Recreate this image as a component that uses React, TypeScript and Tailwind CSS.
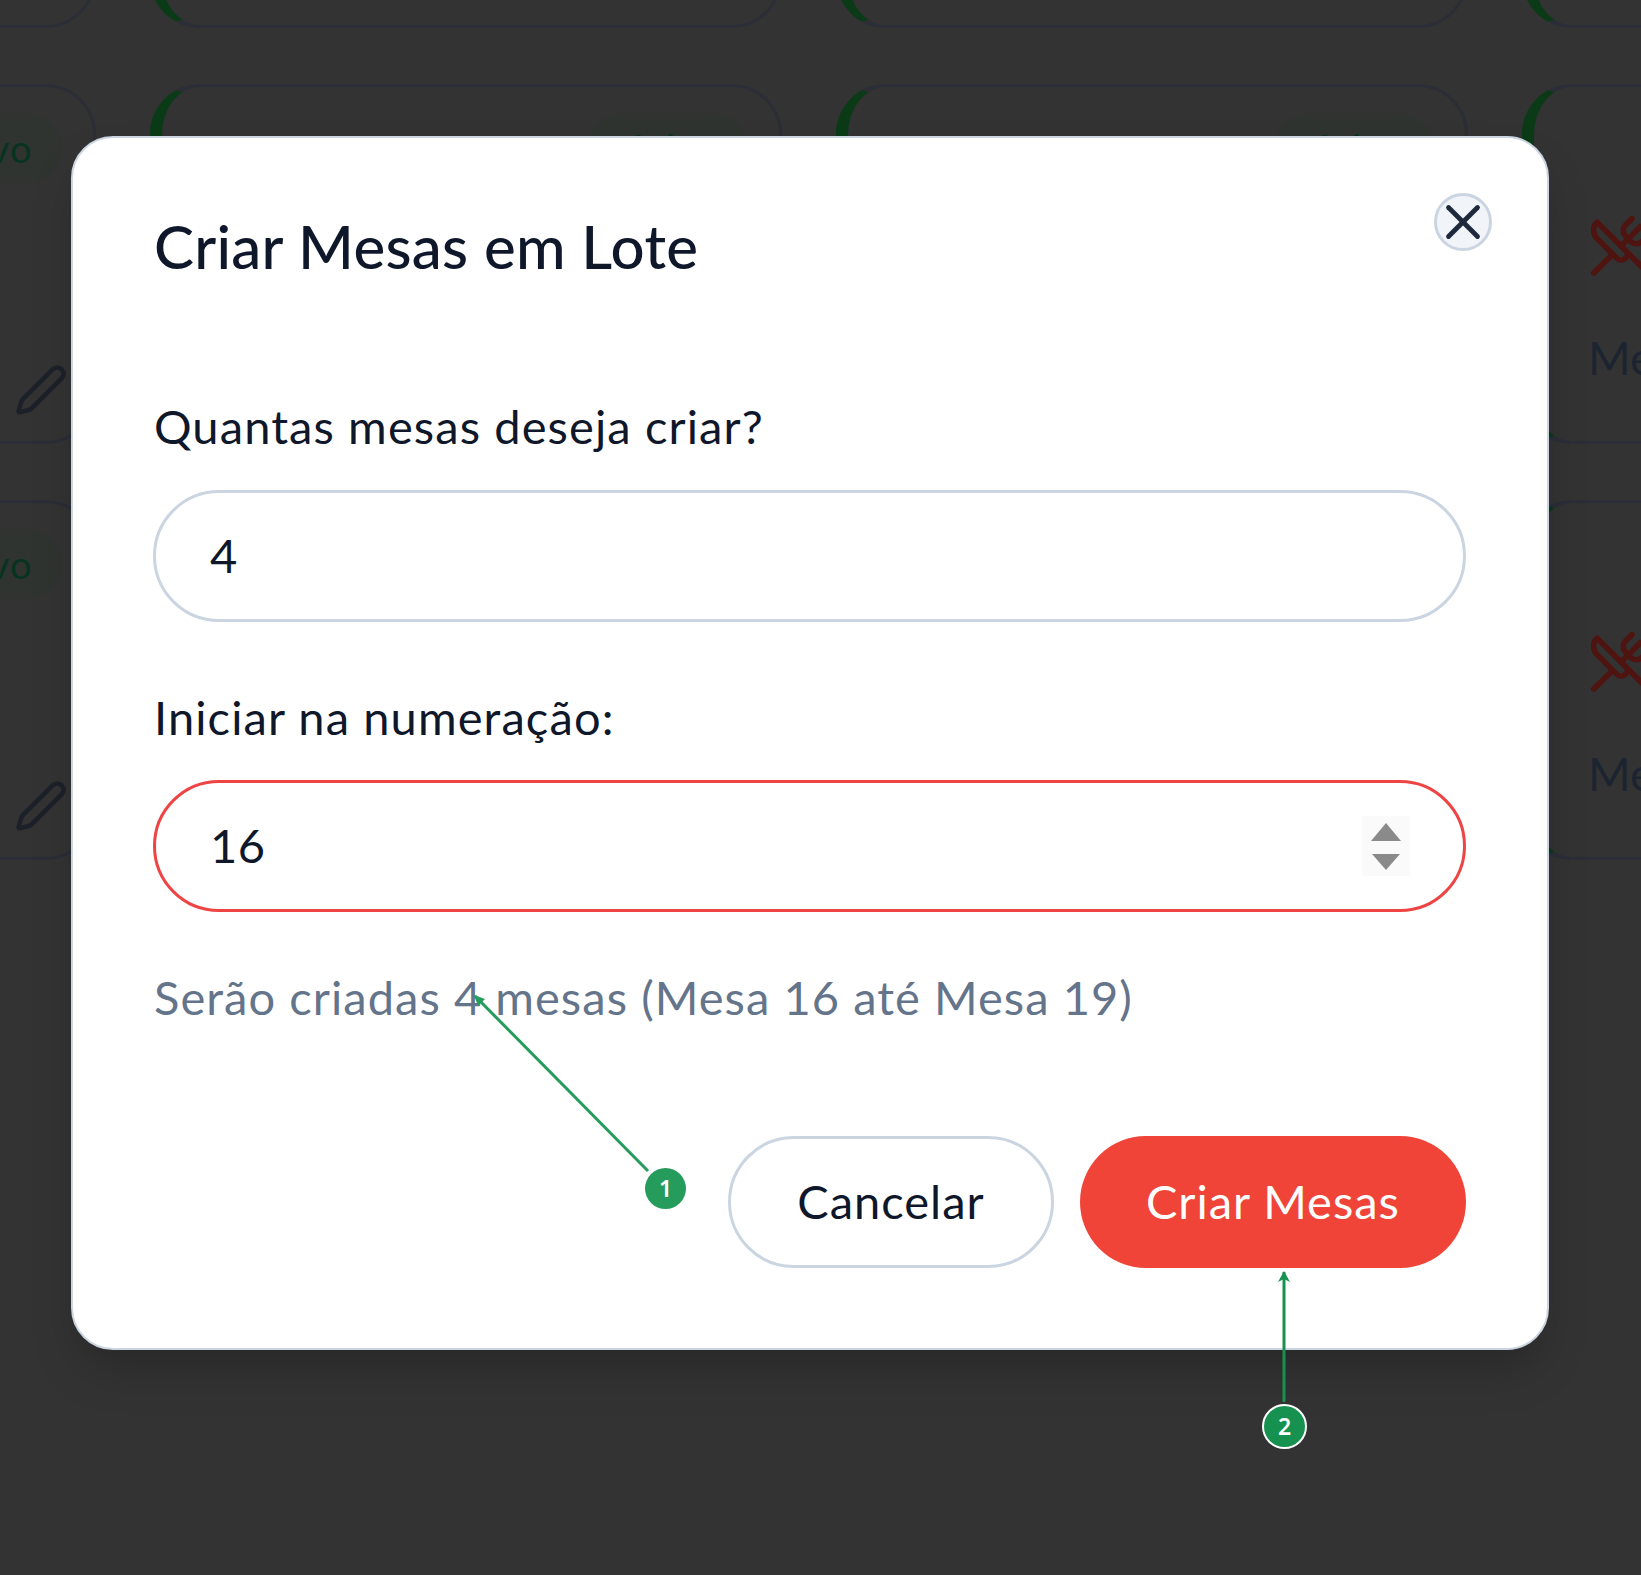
import { Pen, UtensilsCrossed, X } from 'lucide-react';

const tables = Array.from({ length: 12 }, (_, i) => i + 1);

function TableCard({ number }: { number: number }) {
  return (
    <div className="flex h-[360px] justify-between rounded-[50px] border-[3px] border-l-[12px] border-[#2b2e36] border-l-[#0a3a16]">
      <div className="pl-[54px] pt-[126px]">
        <UtensilsCrossed size={66} strokeWidth={2} className="text-[#4f1310]" />
        <p className="mt-[55px] text-[46px] leading-[48px] text-[#1c2430]">Mesa {number}</p>
      </div>
      <div className="flex flex-col items-end justify-between pb-[24px] pr-[25px] pt-[26px]">
        <span className="mr-[6px] flex h-[70px] w-[160px] items-center justify-center rounded-full bg-[#2f3430] pl-[8px] text-[38px] tracking-[1px] text-[#083320]">
          Ativo
        </span>
        <Pen size={54} strokeWidth={2} className="text-[#1c2029]" />
      </div>
    </div>
  );
}

function NumberField({ value, error }: { value: string; error?: boolean }) {
  return (
    <div
      className={`flex h-[132px] items-center justify-between rounded-full border-[3px] bg-white pl-[54px] pr-[53px] ${
        error ? 'border-[#ef4444]' : 'border-[#cbd5e1]'
      }`}
    >
      <input
        readOnly
        value={value}
        className="mb-[2px] w-[200px] bg-transparent text-[47px] tracking-[0.5px] text-[#0f172a] outline-none"
      />
      {error && (
        <div className="flex h-[60px] w-[48px] flex-col items-center justify-center gap-[13px] bg-[#fafafa]">
          <svg width="30" height="18" viewBox="0 0 30 18" className="fill-[#8a8a8a]">
            <path d="M15 0 L30 18 L0 18 Z" />
          </svg>
          <svg width="28" height="16" viewBox="0 0 28 16" className="fill-[#8a8a8a]">
            <path d="M0 0 L28 0 L14 16 Z" />
          </svg>
        </div>
      )}
    </div>
  );
}

export default function App() {
  return (
    <div className="relative h-[1575px] w-[1641px] overflow-hidden bg-[#333333] [font-family:Lato,sans-serif]">
      {/* Grade de mesas por trás do modal */}
      <div className="ml-[-536px] mt-[-332px] grid w-max grid-cols-[repeat(4,632px)] gap-x-[54px] gap-y-[56px]">
        {tables.map((n) => (
          <TableCard key={n} number={n} />
        ))}
      </div>

      {/* Modal */}
      <div className="absolute inset-0 pl-[71px] pt-[136px]">
        <div className="relative w-[1478px] rounded-[42px] border-2 border-[#cbd5e1] bg-white pb-[80px] pl-[80px] pr-[81px] pt-[76px] shadow-2xl shadow-black/25">
          <button className="absolute right-[55px] top-[55px] flex h-[58px] w-[58px] items-center justify-center rounded-full border-[3px] border-[#cbd5e1] bg-[#f1f5f9] text-[#1e293b]">
            <X size={58} strokeWidth={2} className="shrink-0" />
          </button>

          <h2 className="pl-[1px] text-[60px] font-medium leading-[64px] tracking-[0.3px] text-[#0f172a]">
            Criar Mesas em Lote
          </h2>

          <label className="mb-[37px] mt-[121px] block pl-[1px] text-[47px] leading-[54px] tracking-[1.1px] text-[#0f172a]">
            Quantas mesas deseja criar?
          </label>
          <NumberField value="4" />

          <label className="mb-[36px] mt-[68px] block pl-[1px] text-[47px] leading-[54px] tracking-[1.1px] text-[#0f172a]">
            Iniciar na numeração:
          </label>
          <NumberField value="16" error />

          <p className="mt-[58px] pl-[1px] text-[47px] leading-[54px] tracking-[1.05px] text-[#64748b]">
            Serão criadas 4 mesas (Mesa 16 até Mesa 19)
          </p>

          <div className="mt-[112px] flex justify-end gap-[26px]">
            <button className="h-[132px] w-[326px] rounded-full border-[3px] border-[#cbd5e1] bg-white pb-[2px] text-[47px] tracking-[1px] text-[#0f172a]">
              Cancelar
            </button>
            <button className="h-[132px] w-[386px] rounded-full bg-[#f04438] pb-[2px] text-[47px] tracking-[1px] text-white">
              Criar Mesas
            </button>
          </div>
        </div>
      </div>

      {/* Anotações */}
      <svg width="1641" height="1575" viewBox="0 0 1641 1575" className="pointer-events-none absolute inset-0">
        <path d="M648 1171 L475 996" stroke="#259b5c" strokeWidth="3" fill="none" />
        <path d="M474 995 L485 999 L478 1006 Z" fill="#259b5c" />
        <path d="M1284 1402 L1284 1272" stroke="#17914f" strokeWidth="3" fill="none" />
        <path d="M1284 1271 L1290 1282 L1284 1279 L1278 1282 Z" fill="#17914f" />
      </svg>
      <span className="absolute left-[645px] top-[1168px] flex h-[41px] w-[41px] items-center justify-center rounded-full bg-[#259b5c] text-[23px] font-semibold text-white [font-family:'Noto_Sans',sans-serif]">
        1
      </span>
      <span className="absolute left-[1262px] top-[1404px] flex h-[45px] w-[45px] items-center justify-center rounded-full border-2 border-white bg-[#17914f] text-[23px] font-semibold text-white [font-family:'Noto_Sans',sans-serif]">
        2
      </span>
    </div>
  );
}
